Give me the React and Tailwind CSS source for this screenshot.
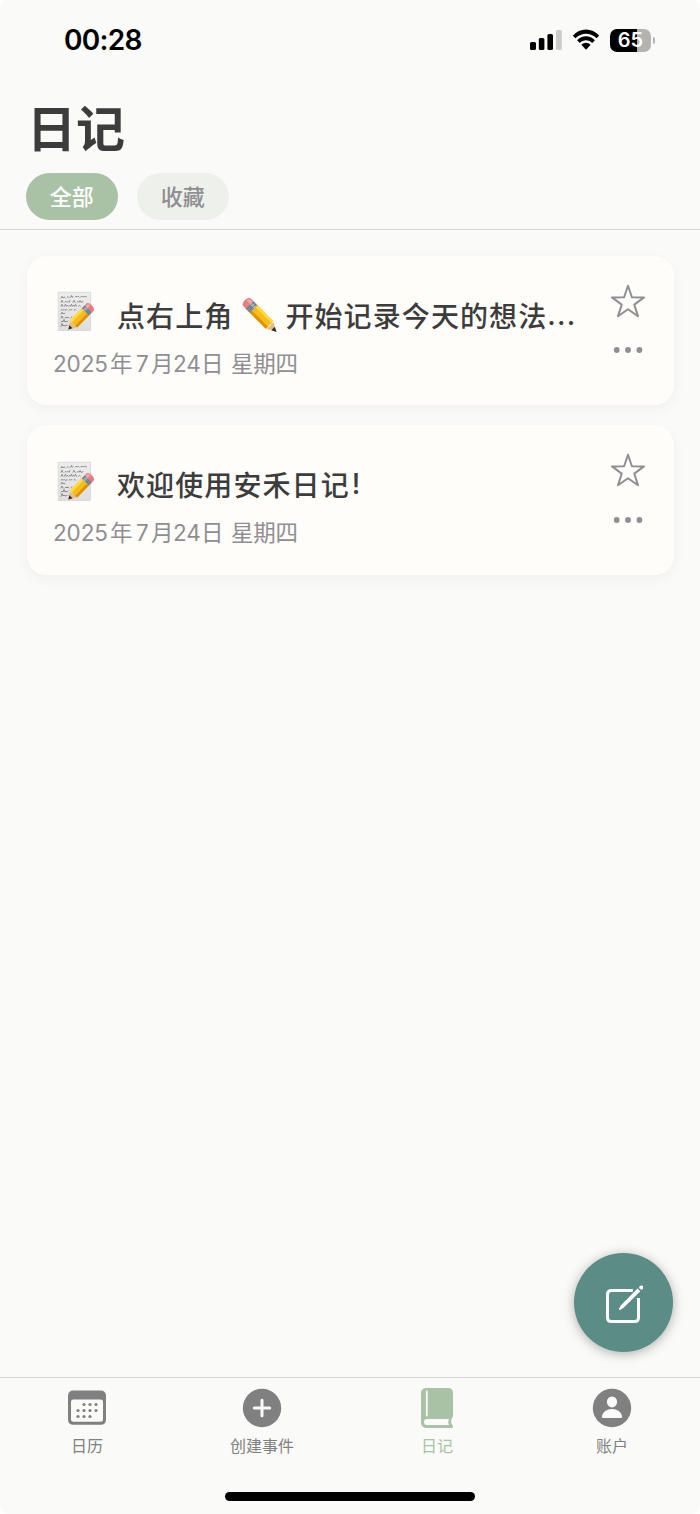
import { useState } from "react";

const CJK_FONT = "font-['Noto_Sans_CJK_SC',sans-serif]";
const INTER_FONT = "font-['Inter','Noto_Sans_CJK_SC',sans-serif]";

const FILTERS = [
  { id: "all", label: "全部" },
  { id: "favorites", label: "收藏" },
];

const ENTRIES = [
  { id: 1, before: "点右上角", after: "开始记录今天的想法", truncated: true },
  { id: 2, before: "欢迎使用安禾日记", after: "", truncated: false },
];

const TABS = [
  { id: "calendar", label: "日历", Icon: CalendarIcon },
  { id: "create", label: "创建事件", Icon: PlusIcon },
  { id: "diary", label: "日记", Icon: BookIcon },
  { id: "account", label: "账户", Icon: AccountIcon },
];

function StatusBar() {
  return (
    <div className="flex h-20 items-center justify-between pr-[45px] pl-16">
      <span className={`${INTER_FONT} text-[28px] leading-[80px] font-semibold tracking-[-0.7px] text-black`}>
        00:28
      </span>
      <div className="flex items-center gap-[10px]">
        <svg width="32" height="22" viewBox="0 0 32 22" aria-hidden="true">
          <rect x="0" y="13" width="6" height="8" rx="1.6" />
          <rect x="8.8" y="9" width="5.6" height="12" rx="1.6" />
          <rect x="17.4" y="5" width="5.6" height="16" rx="1.6" />
          <rect x="26" y="1" width="5.8" height="20" rx="1.6" fill="#cbcbc9" />
        </svg>
        <svg width="28" height="22" viewBox="0 0 28 22" aria-hidden="true">
          <path d="M0.8 6.7C8-1.5 20-1.5 27.2 6.7L24.5 9.3C18.7 3.2 9.3 3.2 3.5 9.3Z" />
          <path d="M5.1 11.2C10 5.8 18 5.8 22.9 11.2L20.2 13.9C16.8 10.3 11.2 10.3 7.8 13.9Z" />
          <path d="M9.3 15.7C12 13 16 13 18.7 15.7L14 20.8Z" />
        </svg>
        <div className="flex items-center gap-[2px]">
          <div className={`${INTER_FONT} flex h-[23px] w-[41px] items-center justify-center rounded-[7px] bg-linear-to-r from-black from-65% to-[#b3b3b1] to-65% text-[20px] leading-[23px] font-semibold text-white`}>
            65
          </div>
          <div className="h-[7px] w-[2px] rounded-r-full bg-[#b3b3b1]" />
        </div>
      </div>
    </div>
  );
}

// Lies along the x axis, eraser at the origin and tip at 44
function PencilShape() {
  return (
    <g>
      <path d="M12 -5.4H35V5.4H12Z" fill="#f7bd16" />
      <path d="M12 -5.4H35V-2.6H12Z" fill="#ffda45" />
      <path d="M12 2.4H35V5.4H12Z" fill="#dc9208" />
      <path d="M35 -5.4L44 0L35 5.4Q37 3.5 35 2.4Q37 0 35 -2.6Q37 -4 35 -5.4Z" fill="#e9bd83" />
      <path d="M40 -2.4L45 0L40 2.4Z" fill="#2b2b2b" />
      <path d="M6 -5.4H12.5V5.4H6Z" fill="#7f8c9a" />
      <path d="M6 -3.4H12.5V-0.8H6Z" fill="#b4bfc9" />
      <path d="M8 -5.4V5.4M10.5 -5.4V5.4" stroke="#5f6c79" strokeWidth="0.7" />
      <path d="M6.5 -5.4H4Q0 -5.4 0 0Q0 5.4 4 5.4H6.5Z" fill="#e77b80" />
      <path d="M6.5 -4.2H4Q1.5 -4 1.2 -1H6.5Z" fill="#f6a6a7" />
    </g>
  );
}

function PencilEmoji() {
  return (
    <svg className="shrink-0" width="36" height="36" viewBox="0 0 36 36" role="img" aria-label="铅笔">
      <g transform="translate(3.8 3.2) rotate(45)">
        <PencilShape />
      </g>
    </svg>
  );
}

function MemoEmoji() {
  return (
    <svg className="shrink-0" width="38" height="42" viewBox="0 0 38 42" role="img" aria-label="日记">
      <defs>
        <linearGradient id="paper" x1="0" y1="0" x2="0" y2="1">
          <stop offset="0" stopColor="#ededed" />
          <stop offset="1" stopColor="#dedede" />
        </linearGradient>
      </defs>
      <rect x="1.2" y="1.2" width="32.4" height="38.4" fill="url(#paper)" stroke="#d3d3d3" strokeWidth="0.7" />
      <g fill="none" stroke="#606060" strokeWidth="0.65" strokeLinejoin="round" strokeLinecap="round">
        <path d="M4 7l1-1.6 1 1.6 1-1.2 1 .9m2-.2l1-1 1 1m1.5-.2l1-1.8.6 1.8 1-.8m2 .6l1-1 1 1 1-1 1 1m1.5 0l1-1 1 1 1-1 1 1 1-1 1 .8" />
        <path d="M4 11.3l1-2 1 2m2 0l1-1 1 1 1-1 1 1 1-2m3 2l1-2 1 2m2 0l1-1 1 1 1-1.8 1 1.8 2-.6" />
        <path d="M4 15.3l1-2 1 2m1.5 0l1-2 1 2 1-1 1 1 1-1 1 1 1-2 1 2 1-1 1 1 1-2 1 2m2 0l1-1 1 1" />
        <path d="M4 19.3l1-1 1 1 1-1 1 1 2-.5m2 .5l1-1 1 1 1-1m2 1l1-1 1 1" />
        <path d="M4 23l1-1.8 1 1.8 1-1 1 .8" />
        <path d="M4 27l1-2 1 2m2 0l1-1 1 1 1-1 1 1m2-.5l1-.8" />
        <path d="M4 31l1-1 1 1 1-2.5 1 2.5 1-1 1 1 1-1" />
        <path d="M4 35.5l1-3 1 2.500 1-1 1 1 2-.6m2 .2l1-1" />
      </g>
      <path d="M11 38.5L19 36L34 20L31 17Z" fill="#000" opacity="0.14" />
      <g transform="translate(34.8 14.2) rotate(134) scale(0.75 -0.94)">
        <PencilShape />
      </g>
    </svg>
  );
}

function StarIcon() {
  return (
    <svg width="36" height="34" viewBox="0 0 36 34" fill="none" stroke="#8e8e93" strokeWidth="2" strokeLinejoin="round" aria-hidden="true">
      <path d="M18 1.8L21.9 13.2L34 13.4L24.3 20.6L28 32.2L18 25.2L8 32.2L11.7 20.6L2 13.4L14.1 13.2Z" />
    </svg>
  );
}

function MoreIcon() {
  return (
    <svg width="30" height="6" viewBox="0 0 30 6" fill="#8e8e93" aria-hidden="true">
      <circle cx="3.7" cy="3" r="2.9" />
      <circle cx="15" cy="3" r="2.9" />
      <circle cx="26.4" cy="3" r="2.9" />
    </svg>
  );
}

function ComposeIcon() {
  return (
    <svg width="40" height="40" viewBox="0 0 40 40" fill="none" stroke="#fff" aria-hidden="true">
      <path d="M30 6.5H8.5Q4.500 6.5 4.500 10.5V33.5Q4.500 37.5 8.500 37.5H31.5Q35.500 37.5 35.500 33.5V14" strokeWidth="3" />
      <path d="M34.6 4.6L37.3 7.3L20.6 23.8L17 25.9Q15.7 26 16 24.7L18 21.2Z" fill="#fff" stroke="#5b8c85" strokeWidth="2.4" paintOrder="stroke" />
      <circle cx="38.300" cy="3.500" r="2.100" fill="#fff" stroke="none" />
    </svg>
  );
}

function CalendarIcon() {
  const dots = [
    [16, 14], [22, 14], [28, 14],
    [10, 20], [16, 20], [22, 20], [28, 20],
    [10, 26], [16, 26], [22, 26],
  ];

  return (
    <svg width="38" height="40" viewBox="0 -2.5 38 40" aria-hidden="true">
      <path
        fill="currentColor"
        fillRule="evenodd"
        d="M5.5 0H32.5Q38 0 38 5.5V28.8Q38 34.3 32.5 34.3H5.5Q0 34.3 0 28.8V5.5Q0 0 5.5 0ZM5.5 9Q3 9 3 11.5V28.7Q3 31.2 5.5 31.2H32.5Q35 31.2 35 28.7V11.5Q35 9 32.5 9Z"
      />
      {dots.map(([cx, cy]) => (
        <circle key={`${cx}-${cy}`} cx={cx} cy={cy} r="1.6" fill="currentColor" />
      ))}
    </svg>
  );
}

function PlusIcon() {
  return (
    <svg width="40" height="40" viewBox="0 0 40 40" aria-hidden="true">
      <circle cx="20" cy="20" r="19.2" fill="currentColor" />
      <path d="M20 12.3V27.7M12.3 20H27.7" stroke="#fafaf8" strokeWidth="3" strokeLinecap="round" />
    </svg>
  );
}

function BookIcon() {
  return (
    <svg width="32" height="40" viewBox="0 0 32 40" aria-hidden="true">
      <path
        fill="currentColor"
        fillRule="evenodd"
        d="M5.5 0H27Q32 0 32 5V27.5Q32 29 31 30Q29.6 32.5 30.5 35.5L32 38Q32.5 40 30.5 40H6Q0 40 0 34V5.5Q0 0 5.5 0ZM6 31Q3 31 3 34Q3 37 6 37H28Q26.5 34 28 31Z"
      />
      <path d="M5.8 3.5V27.5" stroke="#fafaf8" strokeWidth="1.8" strokeLinecap="round" />
    </svg>
  );
}

function AccountIcon() {
  return (
    <svg width="40" height="40" viewBox="0 0 40 40" aria-hidden="true">
      <circle cx="20" cy="20" r="19.2" fill="currentColor" />
      <ellipse cx="20" cy="13.9" rx="5.1" ry="5.5" fill="#fafaf8" />
      <path d="M9.9 28.5C10.5 24 15 21 20 21S29.5 24 30.1 28.5Q30.1 30 28.7 30H11.3Q9.9 30 9.9 28.5Z" fill="#fafaf8" />
    </svg>
  );
}

function EntryDate() {
  return (
    <p className={`${INTER_FONT} mt-[9px] flex h-8 items-center text-[22.5px] leading-8 whitespace-pre text-[#8e8e93]`}>
      <span className="w-[57px] tracking-[-0.1px]">2025</span>
      <span className="w-[26px]">年</span>
      <span className="w-[15px]">7</span>
      <span className="w-[22px]">月</span>
      <span className="w-[28px]">24</span>
      <span className="w-[30px]">日</span>
      <span className="tracking-[-0.3px]">星期四</span>
    </p>
  );
}

function EntryCard({ entry }) {
  return (
    <article className="flex h-[149.5px] justify-between rounded-[20px] bg-[#fefdf9] pt-[27px] pr-[26.5px] pl-[26.5px] shadow-[0_4px_14px_rgba(0,0,0,0.045)]">
      <div className="flex flex-col pt-[8px]">
        <div className="flex h-[48px] items-center">
          <div className="-mt-[5px] ml-[4px] flex">
            <MemoEmoji />
          </div>
          <h2 className={`${CJK_FONT} ml-[22px] flex items-center text-[28px] leading-[48px] font-medium tracking-[1.1px] whitespace-nowrap text-[#3c3c3c]`}>
            {entry.before}
            {entry.truncated ? (
              <>
                <span className="mr-[8px] ml-[8px] flex">
                  <PencilEmoji />
                </span>
                {entry.after}
                <span className={`${INTER_FONT} tracking-[1.2px]`}>...</span>
              </>
            ) : (
              <span className={`${INTER_FONT} ml-[2px]`}>!</span>
            )}
          </h2>
        </div>
        <EntryDate />
      </div>
      <div className="flex w-[38px] flex-col items-center pt-[1px]">
        <button type="button" aria-label="收藏">
          <StarIcon />
        </button>
        <button type="button" aria-label="更多" className="mt-[29.5px]">
          <MoreIcon />
        </button>
      </div>
    </article>
  );
}

function TabBar({ activeTab, onChange }) {
  return (
    <nav className="grid h-[115px] grid-cols-4 border-t border-[#d5d5d5] pt-[10px]">
      {TABS.map(({ id, label, Icon }) => (
        <button
          key={id}
          type="button"
          className={`flex flex-col items-center pr-px ${activeTab === id ? "text-[#a9c2a5]" : "text-[#808080]"}`}
          onClick={() => onChange(id)}
        >
          <Icon />
          <span className={`${CJK_FONT} mt-[5px] text-[16px] leading-6`}>{label}</span>
        </button>
      ))}
    </nav>
  );
}

export default function App() {
  const [filter, setFilter] = useState("all");
  const [activeTab, setActiveTab] = useState("diary");

  return (
    <div className="bg-white">
      <div className="relative flex h-[1514px] w-[700px] flex-col overflow-hidden rounded-[8px] bg-[#fafaf8]">
        <header className="h-[229.5px] shrink-0 border-b border-[#d9d9db]">
          <StatusBar />
          <h1 className={`${CJK_FONT} ml-[27px] h-[92.5px] text-[49px] leading-[92px] font-bold text-[#3c3c3c]`}>日记</h1>
          <div className="ml-[26px] flex gap-[19.5px]">
            {FILTERS.map(({ id, label }) => (
              <button
                key={id}
                type="button"
                className={`${CJK_FONT} h-[47px] w-[91.5px] rounded-full pb-[3px] text-[22px] leading-[44px] font-medium ${
                  filter === id ? "bg-[#a9c2a5] text-white" : "bg-[#eef1eb] text-[#8e8e93]"
                }`}
                onClick={() => setFilter(id)}
              >
                {label}
              </button>
            ))}
          </div>
        </header>

        <main className="flex flex-1 flex-col gap-5 px-[26.5px] pt-[26px]">
          {ENTRIES.map((entry) => (
            <EntryCard key={entry.id} entry={entry} />
          ))}
        </main>

        <button
          type="button"
          aria-label="写日记"
          className="absolute top-[1253px] left-[573.5px] flex size-[99px] items-center justify-center rounded-full bg-[#5b8c85] pt-[2px] shadow-[0_2px_12px_rgba(0,0,0,0.3)]"
        >
          <ComposeIcon />
        </button>

        <TabBar activeTab={activeTab} onChange={setActiveTab} />
        <div className="mb-[13px] h-[9px] w-[250px] shrink-0 self-center rounded-full bg-black" />
      </div>
    </div>
  );
}
